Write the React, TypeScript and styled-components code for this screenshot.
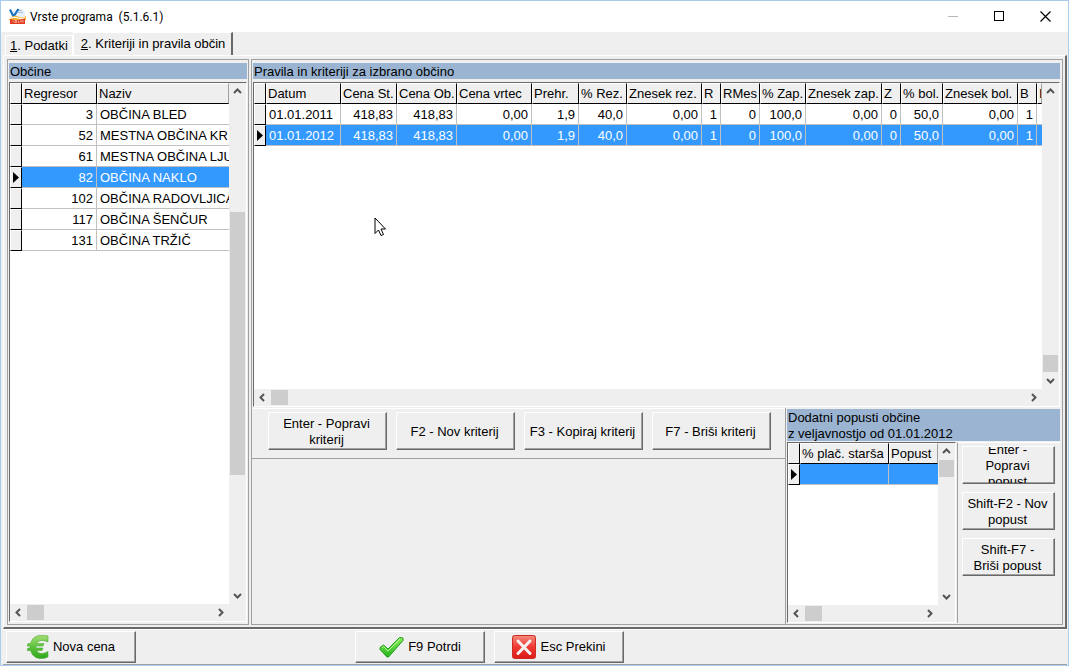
import React from 'react';
import styled, { createGlobalStyle, css } from 'styled-components';

const face = '#efefef';
const shade = '#a0a0a0';
const dark = '#696969';
const caption = '#9ab4d2';
const accent = '#3399ff';

const GlobalStyle = createGlobalStyle`
  *, *::before, *::after { box-sizing: border-box; }
  body {
    margin: 0;
    font: 13px/16px "Liberation Sans", Arial, sans-serif;
    color: #000;
  }
  button { font: inherit; color: inherit; }
`;

const Window = styled.div`
  min-height: 100vh;
  display: flex;
  flex-direction: column;
  background: ${face};
  border: 1px solid #a9cbee;
`;

const TitleBar = styled.header`
  height: 31px;
  display: flex;
  align-items: center;
  padding-left: 8px;
  background: #fff;
`;

const Title = styled.h1`
  flex: 1;
  margin: 0;
  padding-left: 4px;
  font: 12px/16px Roboto, "Open Sans", sans-serif;
  white-space: pre;
`;

const CaptionButton = styled.button`
  width: 46px;
  height: 30px;
  padding: 0;
  border: 0;
  background: none;
  display: grid;
  place-items: center;
`;

const Tabs = styled.div`
  height: 23px;
  display: flex;
  align-items: flex-end;
  padding-left: 4px;
`;

const Tab = styled.button<{ $active?: boolean }>`
  height: ${p => (p.$active ? 23 : 20)}px;
  padding: ${p => (p.$active ? '0 6px 0 7px' : '0 4px')};
  border: 1px solid #fff;
  border-bottom: 0;
  background: ${face};
  white-space: nowrap;
  ${p => p.$active && css`border-right: 2px solid ${dark};`}
`;

const Page = styled.main`
  flex: 1;
  display: flex;
  gap: 2px;
  margin: 0 1px 0 2px;
  padding: 3px 2px 2px 3px;
  border: solid;
  border-width: 1px 2px 2px 1px;
  border-color: #fff ${dark} ${dark} #fff;
`;

const SidePanel = styled.section`
  flex: none;
  width: 242px;
  display: flex;
  flex-direction: column;
  gap: 3px;
  padding: 3px 1px 2px;
  border: 1px solid ${shade};
`;

const MainPanel = styled.section`
  flex: 1;
  min-width: 0;
  display: flex;
  flex-direction: column;
  border: 1px solid ${shade};
`;

const RulesArea = styled.div`
  flex: 1;
  display: flex;
  flex-direction: column;
  gap: 3px;
  padding: 3px 2px 1px 1px;
`;

const Heading = styled.h2<{ $lines?: number }>`
  height: ${p => (p.$lines ?? 1) * 16}px;
  margin: 0;
  padding: 1px 0 0 1px;
  background: ${caption};
  font-size: 13px;
  line-height: 16px;
  font-weight: normal;
  white-space: nowrap;
`;

const GridFrame = styled.div`
  position: relative;
  flex: 1;
  min-width: 0;
  display: grid;
  grid-template-columns: minmax(0, 1fr) 17px;
  grid-template-rows: minmax(0, 1fr) 17px;
  background: ${face};
  border: 1px solid;
  border-color: ${dark} #fff #fff ${dark};
`;

const GridBody = styled.div`
  overflow: hidden;
  background: #fff;
`;

const Table = styled.table`
  width: 100%;
  table-layout: fixed;
  border-collapse: separate;
  border-spacing: 0;
`;

const HeadCell = styled.th`
  height: 21px;
  padding: 0 0 0 1px;
  overflow: hidden;
  background: ${face};
  border: solid 1px;
  border-color: #fff #000 #000 #fff;
  font-weight: normal;
  text-align: left;
  white-space: nowrap;
  &:last-child { border-right-color: ${shade}; }
`;

const Marker = styled.td`
  height: 21px;
  padding: 0;
  background: ${face};
  border: solid 1px;
  border-color: #fff #000 #000 #fff;
  svg { display: block; margin-left: 2px; }
`;

const Cell = styled.td<{ $right?: boolean; $selected?: boolean }>`
  height: 21px;
  padding: 2px 3px 0;
  overflow: hidden;
  border: solid #c0c0c0;
  border-width: 0 1px 1px 0;
  text-align: ${p => (p.$right ? 'right' : 'left')};
  white-space: nowrap;
  &:last-child { border-right: 0; }
  ${p => p.$selected && css`background: ${accent}; color: #fff;`}
`;

const Bar = styled.div<{ $vertical?: boolean }>`
  display: flex;
  flex-direction: ${p => (p.$vertical ? 'column' : 'row')};
  background: ${face};
  min-width: 0;
`;

const Arrow = styled.button`
  flex: none;
  width: 17px;
  height: 17px;
  padding: 0;
  border: 0;
  background: none;
  display: grid;
  place-items: center;
`;

const Track = styled.div<{ $vertical?: boolean; $end?: boolean }>`
  flex: 1;
  display: flex;
  flex-direction: ${p => (p.$vertical ? 'column' : 'row')};
  justify-content: ${p => (p.$end ? 'flex-end' : 'flex-start')};
`;

const Thumb = styled.div<{ $vertical?: boolean; $size?: string }>`
  ${p =>
    p.$vertical
      ? css`height: ${p.$size ?? '17px'}; margin: 0 1px;`
      : css`width: 17px; margin: 1px 0;`}
  background: #cdcdcd;
`;

const LowerArea = styled.div`
  flex: none;
  display: flex;
`;

const Actions = styled.div`
  flex: 1;
  min-width: 0;
`;

const ActionBar = styled.div`
  display: flex;
  gap: 9px;
  padding: 3px 8px 8px 16px;
  border: solid;
  border-width: 1px 0;
  border-color: #fff ${shade} ${shade};
`;

const Discounts = styled.section`
  flex: none;
  width: 277px;
  min-height: 216px;
  display: flex;
  flex-direction: column;
  padding: 1px 2px 1px 1px;
  border-left: 1px solid ${shade};
`;

const DiscountBody = styled.div`
  flex: 1;
  display: flex;
  gap: 1px;
  padding-top: 1px;
`;

const DiscountActions = styled.div`
  flex: none;
  width: 103px;
  display: flex;
  flex-direction: column;
  gap: 8px;
  padding: 3px 4px;
  border: solid;
  border-width: 1px 0 0 1px;
  border-color: #fff #fff #fff ${shade};
`;

const PushButton = styled.button<{ $width: number }>`
  flex: none;
  width: ${p => p.$width}px;
  height: 38px;
  padding: 2px 6px 0 4px;
  display: flex;
  align-items: center;
  justify-content: center;
  overflow: hidden;
  background: ${face};
  border: solid 1px;
  border-color: #fff ${dark} ${dark} #fff;
  box-shadow: inset -1px -1px ${shade};
  text-align: center;
`;

const WideButton = styled(PushButton)`
  height: 32px;
  gap: 4px;
  padding: 0 4px;
`;

const Footer = styled.footer`
  display: flex;
  gap: 9px;
  margin: 0 1px 0 2px;
  padding: 1px 3px;
  border-top: 1px solid #fff;
  border-bottom: 1px solid ${shade};
`;

const Spacer = styled.div`
  width: 201px;
`;

const Pointer = styled.svg`
  position: absolute;
  left: 120px;
  top: 134px;
`;

const arrowPaths = {
  up: 'M1 6 L4.500 2.500 L8 6',
  down: 'M1 3 L4.500 6.500 L8 3',
  left: 'M6 1 L2.500 4.500 L6 8',
  right: 'M3 1 L6.500 4.500 L3 8',
};

function ArrowButton({ dir }: { dir: keyof typeof arrowPaths }) {
  return (
    <Arrow type="button" aria-label={`Scroll ${dir}`}>
      <svg width="9" height="9" viewBox="0 0 9 9">
        <path d={arrowPaths[dir]} fill="none" stroke="#555" strokeWidth="2" />
      </svg>
    </Arrow>
  );
}

type Column = { label: string; width?: number; right?: boolean };

type GridProps = {
  columns: Column[];
  rows: string[][];
  selected: number;
  thumb?: string;
  thumbAtEnd?: boolean;
  thumbGap?: React.ReactNode;
  children?: React.ReactNode;
};

const ThumbGap = styled.div`
  height: 23%;
`;

function DataGrid({ columns, rows, selected, thumb, thumbAtEnd, thumbGap, children }: GridProps) {
  return (
    <GridFrame>
      <GridBody>
        <Table>
          <colgroup>
            <col width={12} />
            {columns.map(c => <col key={c.label} width={c.width} />)}
          </colgroup>
          <thead>
            <tr>
              <HeadCell aria-label="Izbor" />
              {columns.map(c => <HeadCell key={c.label} scope="col">{c.label}</HeadCell>)}
            </tr>
          </thead>
          <tbody>
            {rows.map((row, r) => (
              <tr key={r}>
                <Marker>
                  {r === selected && (
                    <svg width="7" height="11" viewBox="0 0 7 11"><path d="M0 0 L6 5.500 L0 11Z" /></svg>
                  )}
                </Marker>
                {row.map((value, c) => (
                  <Cell key={c} $right={columns[c].right} $selected={r === selected}>{value}</Cell>
                ))}
              </tr>
            ))}
          </tbody>
        </Table>
      </GridBody>
      <Bar $vertical>
        <ArrowButton dir="up" />
        <Track $vertical $end={thumbAtEnd}>
          {thumbGap}
          <Thumb $vertical $size={thumb} />
        </Track>
        <ArrowButton dir="down" />
      </Bar>
      <Bar>
        <ArrowButton dir="left" />
        <Track><Thumb /></Track>
        <ArrowButton dir="right" />
      </Bar>
      {children}
    </GridFrame>
  );
}

const townColumns: Column[] = [{ label: 'Regresor', width: 75, right: true }, { label: 'Naziv' }];
const towns = [
  ['3', 'OBČINA BLED'],
  ['52', 'MESTNA OBČINA KR'],
  ['61', 'MESTNA OBČINA LJU'],
  ['82', 'OBČINA NAKLO'],
  ['102', 'OBČINA RADOVLJICA'],
  ['117', 'OBČINA ŠENČUR'],
  ['131', 'OBČINA TRŽIČ'],
];

const ruleColumns: Column[] = [
  { label: 'Datum', width: 75 },
  { label: 'Cena St.', width: 56, right: true },
  { label: 'Cena Ob.', width: 60, right: true },
  { label: 'Cena vrtec', width: 75, right: true },
  { label: 'Prehr.', width: 47, right: true },
  { label: '% Rez.', width: 48, right: true },
  { label: 'Znesek rez.', width: 75, right: true },
  { label: 'R', width: 19, right: true },
  { label: 'RMes', width: 39, right: true },
  { label: '% Zap.', width: 46, right: true },
  { label: 'Znesek zap.', width: 76, right: true },
  { label: 'Z', width: 19, right: true },
  { label: '% bol.', width: 42, right: true },
  { label: 'Znesek bol.', width: 75, right: true },
  { label: 'B', width: 19, right: true },
  { label: 'I' },
];
const ruleValues = ['418,83', '418,83', '0,00', '1,9', '40,0', '0,00', '1', '0', '100,0', '0,00', '0', '50,0', '0,00', '1', ''];
const rules = [['01.01.2011', ...ruleValues], ['01.01.2012', ...ruleValues]];

const discountColumns: Column[] = [{ label: '% plač. starša', width: 89 }, { label: 'Popust' }];

function AppLogo() {
  return (
    <svg width="17" height="17" viewBox="0 0 17 17">
      <path d="M6 1h8l2 3v7H3V5z" fill="#e9f0f7" />
      <path d="M1 1.500 L4.500 8.500 L9.500 1" fill="none" stroke="#1673c4" strokeWidth="2.200" />
      <path d="M8 4.500h6M10 2.500h3" stroke="#a9c4de" />
      <path d="M0 11 Q5 6 9 8.500 T17 8 V12H0z" fill="#f6b52c" />
      <path d="M1 10.500 Q5 8 9 10 T16 9.500" fill="none" stroke="#fff" />
      <path d="M1 11 Q8 13 16 10.500 V16H1z" fill="#e2391f" />
      <path d="M4 12.500v2M6 12.500h1.500v2H6zM9.500 12.500v2h1M12 14.500v-2l1 1 1-1v2" fill="none" stroke="#ffd9c9" strokeWidth=".7" />
    </svg>
  );
}

function EuroIcon() {
  return (
    <svg width="22" height="24" viewBox="0 0 22 24">
      <defs>
        <linearGradient id="euro" x1="0" y1="0" x2="0" y2="1">
          <stop offset="0" stopColor="#a4dc74" />
          <stop offset=".5" stopColor="#5fc23d" />
          <stop offset="1" stopColor="#2fa51d" />
        </linearGradient>
      </defs>
      <path
        d="M21 1 V7 Q17 5 14 5.500 Q10.500 6 9.500 8.500 H17 L16 11 H9 V13 H16 L15 15.500 H9.500 Q11 18.500 14.500 18.500 Q18 18.500 21 16.500 V22 Q17 24 12.500 23.500 Q5.500 22.500 3.500 15.500 H0 L1 13 H3 V11 H0 L1 8.500 H3.500 Q5.500 1.500 12 .5 Q17 0 21 1Z"
        fill="url(#euro)" stroke="#4bae35" strokeWidth=".6"
      />
    </svg>
  );
}

function CheckIcon() {
  return (
    <svg width="25" height="22" viewBox="0 0 25 22">
      <defs>
        <linearGradient id="tick" x1="0" y1="0" x2="0" y2="1">
          <stop offset="0" stopColor="#8cf05c" />
          <stop offset="1" stopColor="#25b51c" />
        </linearGradient>
      </defs>
      <path d="M1 11.500 L4.500 9 L9 13 L20.500 1.500 L24 2 V4.500 L9.500 21 H8 L1 13.500Z" fill="url(#tick)" stroke="#239a1c" strokeLinejoin="round" />
      <path d="M3 12 L4.500 10.500 L9 15 L21 3" fill="none" stroke="#b8f79a" />
    </svg>
  );
}

function CancelIcon() {
  return (
    <svg width="24" height="24" viewBox="0 0 24 24">
      <defs>
        <linearGradient id="cancel" x1="0" y1="0" x2="0" y2="1">
          <stop offset="0" stopColor="#f58a7c" />
          <stop offset=".5" stopColor="#ee3a32" />
          <stop offset="1" stopColor="#dd1a17" />
        </linearGradient>
      </defs>
      <rect x=".5" y=".5" width="23" height="23" rx="2" fill="url(#cancel)" stroke="#cf2a22" />
      <path d="M6 6 L18 18.500 M18 6 L6 18.500" stroke="#f7f2f2" strokeWidth="3" strokeLinecap="round" />
    </svg>
  );
}

export default function App() {
  return (
    <Window>
      <GlobalStyle />
      <TitleBar>
        <AppLogo />
        <Title>{'Vrste programa  (5.1.6.1)'}</Title>
        <CaptionButton type="button" aria-label="Minimize">
          <svg width="11" height="11"><path d="M0 5.500H10" stroke="#b8b8b8" /></svg>
        </CaptionButton>
        <CaptionButton type="button" aria-label="Maximize">
          <svg width="11" height="11"><rect x=".5" y=".5" width="9" height="9" fill="none" stroke="#000" /></svg>
        </CaptionButton>
        <CaptionButton type="button" aria-label="Close">
          <svg width="11" height="11"><path d="M.5 .5 L10.500 10.500 M10.500 .5 L.5 10.500" stroke="#000" strokeWidth="1.200" /></svg>
        </CaptionButton>
      </TitleBar>
      <Tabs role="tablist">
        <Tab type="button" role="tab" aria-selected="false"><u>1</u>. Podatki</Tab>
        <Tab type="button" role="tab" aria-selected="true" $active><u>2</u>. Kriteriji in pravila občin</Tab>
      </Tabs>
      <Page>
        <SidePanel>
          <Heading>Občine</Heading>
          <DataGrid columns={townColumns} rows={towns} selected={3} thumb="54%" thumbGap={<ThumbGap />} />
        </SidePanel>
        <MainPanel>
          <RulesArea>
            <Heading>Pravila in kriteriji za izbrano občino</Heading>
            <DataGrid columns={ruleColumns} rows={rules} selected={1} thumbAtEnd>
              <Pointer width="13" height="20" viewBox="0 0 13 20">
                <path d="M1 1 V16.500 L4.500 13 L7 18.500 L9.500 17.500 L7 12 H11.500Z" fill="#fff" stroke="#000" />
              </Pointer>
            </DataGrid>
          </RulesArea>
          <LowerArea>
            <Actions>
              <ActionBar>
                <PushButton type="button" $width={119}>Enter - Popravi kriterij</PushButton>
                <PushButton type="button" $width={119}>F2 - Nov kriterij</PushButton>
                <PushButton type="button" $width={119}>F3 - Kopiraj kriterij</PushButton>
                <PushButton type="button" $width={119}>F7 - Briši kriterij</PushButton>
              </ActionBar>
            </Actions>
            <Discounts>
              <Heading $lines={2}>Dodatni popusti občine<br />z veljavnostjo od 01.01.2012</Heading>
              <DiscountBody>
                <DataGrid columns={discountColumns} rows={[['', '']]} selected={0} />
                <DiscountActions>
                  <PushButton type="button" $width={93}>Enter -<br />Popravi<br />popust</PushButton>
                  <PushButton type="button" $width={93}>Shift-F2 - Nov popust</PushButton>
                  <PushButton type="button" $width={93}>Shift-F7 - Briši popust</PushButton>
                </DiscountActions>
              </DiscountBody>
            </Discounts>
          </LowerArea>
        </MainPanel>
      </Page>
      <Footer>
        <WideButton type="button" $width={130}><EuroIcon />Nova cena</WideButton>
        <Spacer />
        <WideButton type="button" $width={130}><CheckIcon />F9 Potrdi</WideButton>
        <WideButton type="button" $width={130}><CancelIcon />Esc Prekini</WideButton>
      </Footer>
    </Window>
  );
}
